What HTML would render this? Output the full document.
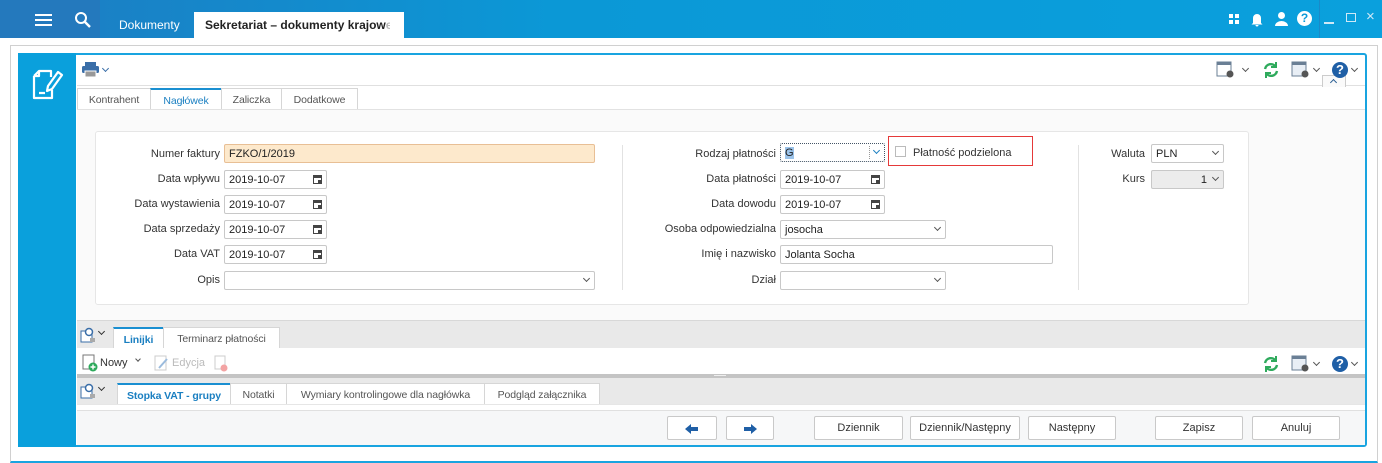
<!DOCTYPE html>
<html><head><meta charset="utf-8"><style>
*{box-sizing:border-box;margin:0;padding:0}
body{width:1382px;height:463px;overflow:hidden;background:#fff;font-family:"Liberation Sans",sans-serif;font-size:11px;color:#333;position:relative}
.a{position:absolute}
.top{left:0;top:0;width:1382px;height:38px;background:linear-gradient(90deg,#1d7cc2,#0b98d6 40%,#0aa0dd)}
.lbl{position:absolute;text-align:right;width:200px;font-size:11px;color:#333;white-space:nowrap}
.inp{position:absolute;border:1px solid #c8c8c8;background:#fff;height:19px;padding:3px 4px 0;line-height:13px;font-size:11px;color:#222;border-radius:2px;white-space:nowrap}
.cal{position:absolute;right:4px;top:4px;width:9px;height:9px;border:1.5px solid #444;border-top-width:3px}
.cal:after{content:"";position:absolute;right:0;bottom:0;width:3px;height:3px;background:#444}
.dd{position:absolute;right:5px;top:4px;width:5px;height:5px;border-right:1.3px solid #555;border-bottom:1.3px solid #555;transform:rotate(45deg)}
.tab{position:absolute;height:21px;border:1px solid #d6d6d6;border-bottom:none;background:#fff;padding-top:5px;text-align:center;color:#555;font-size:10.5px;white-space:nowrap;letter-spacing:-0.1px}
.btn{position:absolute;top:416px;height:24px;border:1px solid #c9c9c9;border-radius:2px;background:#fff;text-align:center;line-height:22px;font-size:11px;color:#333}
</style></head><body>
<div class="a top"></div>
<div class="a" style="left:0;top:0;width:100px;height:38px;background:#2479bd"></div>
<div class="a" style="left:35px;top:14px;width:17px;height:2px;background:#fff;box-shadow:0 5px 0 #fff,0 10px 0 #fff"></div>
<svg class="a" style="left:74px;top:11px" width="18" height="18"><circle cx="7" cy="7" r="5" stroke="#fff" stroke-width="2" fill="none"/><path d="M11 11L16 16" stroke="#fff" stroke-width="2.4"/></svg>
<div class="a" style="left:119px;top:18px;color:#fff;font-size:12px">Dokumenty</div>
<div class="a" style="left:194px;top:12px;width:210px;height:26px;background:#fff"></div>
<div class="a" style="left:205px;top:18px;font-size:12px;font-weight:bold;color:#222;white-space:nowrap;width:185px;overflow:hidden">Sekretariat – dokumenty krajow<span style="color:#bbb">e –</span></div>
<div class="a" style="left:1229px;top:14px;width:4px;height:4px;background:#fff;box-shadow:6px 0 #fff,0 6px #fff,6px 6px #fff"></div>
<svg class="a" style="left:1250px;top:11px" width="14" height="16"><path d="M3 12V7a4 4 0 0 1 8 0v5l1.5 1.5h-11z M5.5 14a1.5 1.5 0 0 0 3 0" fill="#fff"/></svg>
<svg class="a" style="left:1274px;top:11px" width="15" height="15"><circle cx="7.5" cy="4.5" r="3.5" fill="#fff"/><path d="M1 15a6.5 5 0 0 1 13 0z" fill="#fff"/></svg>
<div class="a" style="left:1297px;top:11px;width:15px;height:15px;border-radius:50%;background:#fff;color:#0a9ad8;font-weight:bold;font-size:12px;text-align:center;line-height:15px">?</div>
<div class="a" style="left:1319px;top:0;width:1px;height:38px;background:#1a8ac9"></div>
<div class="a" style="left:1324px;top:22px;width:10px;height:1.5px;background:#cfe9f7"></div>
<div class="a" style="left:1346px;top:13px;width:10px;height:9px;border:1.5px solid #cfe9f7"></div>
<div class="a" style="left:1366px;top:8px;color:#cfe9f7;font-size:15px">×</div>

<div class="a" style="left:10px;top:45px;width:1368px;height:418px;border:1px solid #d0d0d0;border-bottom:2px solid #19a4e0"></div>
<div class="a" style="left:18px;top:53px;width:1349px;height:394px;border:2px solid #19a4e0;border-radius:3px;background:#fff"></div>
<div class="a" style="left:18px;top:53px;width:58px;height:394px;background:#0aa0dc"></div>
<svg class="a" style="left:30px;top:67px" width="34" height="36" fill="none" stroke="#fff" stroke-width="2.2" stroke-linejoin="round"><path d="M4 9l5-5h12v6 M4 9v22h18v-8 M4 9h5V4 M9 26h6"/><path d="M28 5l4 3-10 14-5 2 1-5z"/></svg>

<svg class="a" style="left:81px;top:61px" width="20" height="17"><rect x="4" y="1" width="11" height="4" fill="#3a6ea8"/><rect x="1" y="5" width="17" height="7" rx="1.5" fill="#3a6ea8"/><rect x="4" y="10" width="11" height="6" fill="#999" stroke="#fff"/></svg>
<div class="dd" style="left:103px;top:66px;position:absolute;width:5px;height:5px;border-color:#3a6ea8"></div>
<div class="a" style="left:77px;top:85px;width:1288px;height:1px;background:#e0e0e0"></div>
<div class="tab" style="left:77px;top:88px;width:74px">Kontrahent</div>
<div class="tab" style="left:150px;top:88px;width:72px;color:#1a7fc1;border-top:2px solid #1a8fd1">Nagłówek</div>
<div class="tab" style="left:221px;top:88px;width:61px">Zaliczka</div>
<div class="tab" style="left:281px;top:88px;width:77px">Dodatkowe</div>
<div class="a" style="left:77px;top:109px;width:1288px;height:211px;background:#fafafa;border-top:1px solid #e2e2e2"></div>
<div class="a" style="left:1322px;top:75px;width:24px;height:12px;border:1px solid #ccc;border-bottom:none;background:#fafafa"></div>
<div class="dd" style="left:1331px;top:80px;transform:rotate(-135deg);border-color:#2b5f94"></div>
<svg class="a" style="left:1216px;top:61px" width="20" height="18"><rect x="1" y="1" width="14" height="14" fill="#fff" stroke="#6a7f95"/><rect x="1" y="1" width="14" height="3" fill="#6a7f95"/><circle cx="14" cy="13" r="3.5" fill="#555"/></svg>
<div class="dd" style="left:1243px;top:66px"></div>
<svg class="a" style="left:1262px;top:61px" width="18" height="18" fill="none" stroke="#2eaa5c" stroke-width="2.4"><path d="M3 8a6 6 0 0 1 11-2 M15 10a6 6 0 0 1-11 2"/><path d="M14 1v5h-5 M4 17v-5h5" stroke-width="2"/></svg>
<svg class="a" style="left:1291px;top:61px" width="20" height="18"><rect x="1" y="1" width="14" height="14" fill="#e8eef5" stroke="#6a7f95"/><rect x="1" y="1" width="14" height="3" fill="#6a7f95"/><circle cx="14" cy="13" r="3.5" fill="#555"/></svg>
<div class="dd" style="left:1314px;top:66px"></div>
<div class="a" style="left:1332px;top:62px;width:16px;height:16px;border-radius:50%;background:#1f5fa6;color:#fff;font-weight:bold;font-size:13px;text-align:center;line-height:16px">?</div>
<div class="dd" style="left:1352px;top:66px"></div>

<div class="a" style="left:95px;top:131px;width:1154px;height:174px;background:#fff;border:1px solid #e6e6e6;border-radius:3px"></div>
<div class="a" style="left:622px;top:145px;width:1px;height:145px;background:#e2e2e2"></div>
<div class="a" style="left:1078px;top:145px;width:1px;height:145px;background:#e2e2e2"></div>

<div class="lbl" style="left:20px;top:148px">Numer faktury</div>
<div class="inp" style="left:224px;top:144px;width:371px;background:#fde9cc;border-color:#e8bf95">FZKO/1/2019</div>
<div class="lbl" style="left:20px;top:173px">Data wpływu</div>
<div class="inp" style="left:224px;top:170px;width:103px">2019-10-07<i class="cal"></i></div>
<div class="lbl" style="left:20px;top:198px">Data wystawienia</div>
<div class="inp" style="left:224px;top:195px;width:103px">2019-10-07<i class="cal"></i></div>
<div class="lbl" style="left:20px;top:223px">Data sprzedaży</div>
<div class="inp" style="left:224px;top:220px;width:103px">2019-10-07<i class="cal"></i></div>
<div class="lbl" style="left:20px;top:248px">Data VAT</div>
<div class="inp" style="left:224px;top:245px;width:103px">2019-10-07<i class="cal"></i></div>
<div class="lbl" style="left:20px;top:274px">Opis</div>
<div class="inp" style="left:224px;top:271px;width:371px"><i class="dd"></i></div>

<div class="lbl" style="left:576px;top:148px">Rodzaj płatności</div>
<div class="inp" style="left:780px;top:143px;width:105px;border:1px dotted #456"><span style="background:#9bc3ea">G</span><i class="a" style="left:88px;top:2px;height:13px;border-left:1px dotted #999"></i><i class="dd" style="border-color:#1a7fc1"></i></div>
<div class="a" style="left:888px;top:136px;width:145px;height:30px;border:1px solid #e53939"></div>
<div class="a" style="left:895px;top:146px;width:11px;height:11px;border:1px solid #bbb"></div>
<div class="a" style="left:913px;top:147px;font-size:11px">Płatność podzielona</div>
<div class="lbl" style="left:576px;top:173px">Data płatności</div>
<div class="inp" style="left:780px;top:170px;width:105px">2019-10-07<i class="cal"></i></div>
<div class="lbl" style="left:576px;top:198px">Data dowodu</div>
<div class="inp" style="left:780px;top:195px;width:105px">2019-10-07<i class="cal"></i></div>
<div class="lbl" style="left:576px;top:223px">Osoba odpowiedzialna</div>
<div class="inp" style="left:780px;top:220px;width:166px">josocha<i class="dd"></i></div>
<div class="lbl" style="left:576px;top:248px">Imię i nazwisko</div>
<div class="inp" style="left:780px;top:245px;width:273px">Jolanta Socha</div>
<div class="lbl" style="left:576px;top:274px">Dział</div>
<div class="inp" style="left:780px;top:271px;width:166px"><i class="dd"></i></div>

<div class="lbl" style="left:945px;top:148px">Waluta</div>
<div class="inp" style="left:1151px;top:144px;width:73px">PLN<i class="dd"></i></div>
<div class="lbl" style="left:945px;top:173px">Kurs</div>
<div class="inp" style="left:1151px;top:170px;width:73px;background:#ececec;text-align:right;padding-right:16px">1<i class="dd"></i></div>

<div class="a" style="left:77px;top:320px;width:1288px;height:28px;background:#e9e9e9;border-top:1px solid #d8d8d8"></div>
<svg class="a" style="left:80px;top:327px" width="16" height="16"><rect x="1" y="4" width="11" height="11" fill="#fff" stroke="#3a6ea8"/><circle cx="9" cy="5" r="3.5" fill="#fff" stroke="#3a6ea8" stroke-width="1.5"/><rect x="10" y="11" width="5" height="4" fill="#aaa"/></svg>
<div class="dd" style="left:99px;top:329px;border-color:#333"></div>
<div class="tab" style="left:113px;top:327px;width:51px;color:#1a7fc1;font-weight:bold;border-top:2px solid #1a8fd1">Linijki</div>
<div class="tab" style="left:163px;top:327px;width:117px">Terminarz płatności</div>
<div class="a" style="left:77px;top:348px;width:1288px;height:26px;background:#fff"></div>
<svg class="a" style="left:82px;top:354px" width="16" height="18"><rect x="1" y="1" width="11" height="14" fill="#fff" stroke="#777"/><circle cx="11" cy="13" r="4.5" fill="#2eaa5c"/><path d="M11 10.5v5M8.5 13h5" stroke="#fff" stroke-width="1.4"/></svg>
<div class="a" style="left:100px;top:357px;font-size:11px">Nowy</div>
<div class="dd" style="left:136px;top:357px;width:4px;height:4px"></div>
<svg class="a" style="left:154px;top:355px" width="16" height="16"><rect x="1" y="1" width="11" height="14" fill="#fff" stroke="#ccc"/><path d="M5 13l8-9" stroke="#9bbbdd" stroke-width="2"/></svg>
<div class="a" style="left:172px;top:357px;font-size:11px;color:#bbb">Edycja</div>
<svg class="a" style="left:214px;top:355px" width="16" height="17"><rect x="1" y="1" width="10" height="13" fill="#fff" stroke="#ccc"/><circle cx="10" cy="13" r="3.5" fill="#f3a3a3"/></svg>
<svg class="a" style="left:1262px;top:355px" width="18" height="18" fill="none" stroke="#2eaa5c" stroke-width="2.4"><path d="M3 8a6 6 0 0 1 11-2 M15 10a6 6 0 0 1-11 2"/><path d="M14 1v5h-5 M4 17v-5h5" stroke-width="2"/></svg>
<svg class="a" style="left:1291px;top:355px" width="20" height="18"><rect x="1" y="1" width="14" height="14" fill="#e8eef5" stroke="#6a7f95"/><rect x="1" y="1" width="14" height="3" fill="#6a7f95"/><circle cx="14" cy="13" r="3.5" fill="#555"/></svg>
<div class="dd" style="left:1314px;top:360px"></div>
<div class="a" style="left:1332px;top:356px;width:16px;height:16px;border-radius:50%;background:#1f5fa6;color:#fff;font-weight:bold;font-size:13px;text-align:center;line-height:16px">?</div>
<div class="dd" style="left:1352px;top:360px"></div>
<div class="a" style="left:77px;top:374px;width:1288px;height:4px;background:#c4c4c4"></div>
<div class="a" style="left:714px;top:375px;width:12px;height:1px;background:#eee"></div>
<div class="a" style="left:77px;top:378px;width:1288px;height:28px;background:#e9e9e9"></div>
<svg class="a" style="left:80px;top:383px" width="16" height="16"><rect x="1" y="4" width="11" height="11" fill="#fff" stroke="#3a6ea8"/><circle cx="9" cy="5" r="3.5" fill="#fff" stroke="#3a6ea8" stroke-width="1.5"/><rect x="10" y="11" width="5" height="4" fill="#aaa"/></svg>
<div class="dd" style="left:99px;top:385px;border-color:#333"></div>
<div class="tab" style="left:117px;top:383px;width:114px;color:#1a7fc1;font-weight:bold;border-top:2px solid #1a8fd1">Stopka VAT - grupy</div>
<div class="tab" style="left:230px;top:383px;width:57px">Notatki</div>
<div class="tab" style="left:286px;top:383px;width:199px">Wymiary kontrolingowe dla nagłówka</div>
<div class="tab" style="left:484px;top:383px;width:116px">Podgląd załącznika</div>
<div class="a" style="left:77px;top:404px;width:1288px;height:6px;background:#fff;border-top:1px solid #e6e6e6"></div>
<div class="a" style="left:77px;top:410px;width:1288px;height:35px;background:#f6f7f8;border-top:1px solid #e0e0e0"></div>
<div class="btn" style="left:667px;width:50px"><svg width="16" height="12" style="margin-top:6px"><path d="M1 6L7 1V4H14V8H7V11Z" fill="#1f5fa6"/></svg></div>
<div class="btn" style="left:726px;width:48px"><svg width="16" height="12" style="margin-top:6px"><path d="M15 6L9 1V4H2V8H9V11Z" fill="#1f5fa6"/></svg></div>
<div class="btn" style="left:814px;width:89px">Dziennik</div>
<div class="btn" style="left:910px;width:110px">Dziennik/Następny</div>
<div class="btn" style="left:1028px;width:88px">Następny</div>
<div class="btn" style="left:1155px;width:88px">Zapisz</div>
<div class="btn" style="left:1252px;width:88px">Anuluj</div>
</body></html>
